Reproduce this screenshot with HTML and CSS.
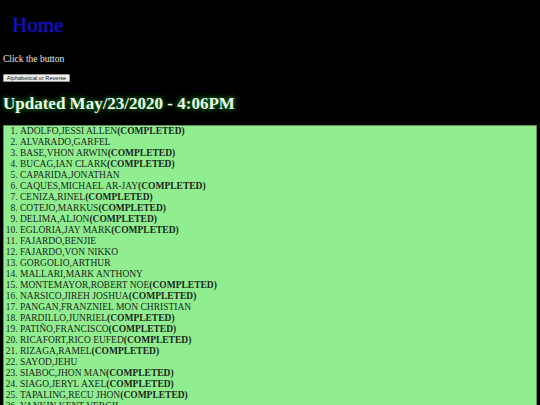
FILE: index.html
```html
<!DOCTYPE html>
<html>
<head>
<meta charset="utf-8">
<link rel="stylesheet" href="styles.css">
</head>
<body>
<header class="nav"><a class="home" href="#">Home</a></header>
<p class="intro">Click the button</p>
<button class="sort-btn" type="button">Alphabetical or Reverse</button>
<h2 class="updated">Updated May/23/2020 - 4:06PM</h2>
<div class="box">
<ol class="list">
<li>ADOLFO,JESSI ALLEN<b>(COMPLETED)</b></li>
<li>ALVARADO,GARFEL</li>
<li>BASE,VHON ARWIN<b>(COMPLETED)</b></li>
<li>BUCAG,IAN CLARK<b>(COMPLETED)</b></li>
<li>CAPARIDA,JONATHAN</li>
<li>CAQUES,MICHAEL AR-JAY<b>(COMPLETED)</b></li>
<li>CENIZA,RINEL<b>(COMPLETED)</b></li>
<li>COTEJO,MARKUS<b>(COMPLETED)</b></li>
<li>DELIMA,ALJON<b>(COMPLETED)</b></li>
<li>EGLORIA,JAY MARK<b>(COMPLETED)</b></li>
<li>FAJARDO,BENJIE</li>
<li>FAJARDO,VON NIKKO</li>
<li>GORGOLIO,ARTHUR</li>
<li>MALLARI,MARK ANTHONY</li>
<li>MONTEMAYOR,ROBERT NOE<b>(COMPLETED)</b></li>
<li>NARSICO,JIREH JOSHUA<b>(COMPLETED)</b></li>
<li>PANGAN,FRANZNIEL MON CHRISTIAN</li>
<li>PARDILLO,JUNRIEL<b>(COMPLETED)</b></li>
<li>PATIÑO,FRANCISCO<b>(COMPLETED)</b></li>
<li>RICAFORT,RICO EUFED<b>(COMPLETED)</b></li>
<li>RIZAGA,RAMEL<b>(COMPLETED)</b></li>
<li>SAYOD,JEHU</li>
<li>SIABOC,JHON MAN<b>(COMPLETED)</b></li>
<li>SIAGO,JERYL AXEL<b>(COMPLETED)</b></li>
<li>TAPALING,RECU JHON<b>(COMPLETED)</b></li>
<li>YANKIN,KENT VERGIL</li>
<li>ZAMORA,JOHN PAUL</li>
</ol>
</div>
</body>
</html>
```
FILE: styles.css
```css
html, body {
  margin: 0;
  padding: 0;
  background: #000;
  height: 100%;
  overflow: hidden;
}
body {
  padding: 0 3px;
  font-family: "Liberation Serif", "Times New Roman", serif;
  display: flex;
  flex-direction: column;
  align-items: flex-start;
}
.nav {
  margin-top: 12.6px;
  padding-left: 9px;
  height: 24px;
  line-height: 24px;
}
.home {
  font-size: 21px;
  font-weight: normal;
  color: #1010c4;
  text-decoration: none;
  text-shadow: 0 0 2px rgba(30, 30, 220, 0.6);
}
.intro {
  margin: 17px 0 0;
  font-size: 9.5px;
  line-height: 11px;
  color: #e8e8e8;
}
.sort-btn {
  margin-top: 9.4px;
  height: 8px;
  width: 67px;
  padding: 0;
  font-family: "Liberation Sans", Arial, sans-serif;
  font-size: 5.6px;
  line-height: 6px;
  color: #111;
  background: #efefef;
  border: 1px solid #9a9a9a;
  border-radius: 1px;
}
.updated {
  margin: 12.3px 0 0;
  font-size: 17px;
  line-height: 20px;
  font-weight: bold;
  color: #f4f4f4;
  text-shadow: 0 0 4px #080, 0 0 6px #060;
}
.box {
  margin-top: 11px;
  align-self: stretch;
  background: #90ee90;
  border: 1px solid #5f8f5f;
}
.list {
  margin: 0;
  padding-left: 16px;
  font-size: 9.5px;
  line-height: 11px;
  color: #1a261a;
}
.list b {
  font-weight: bold;
}
```
